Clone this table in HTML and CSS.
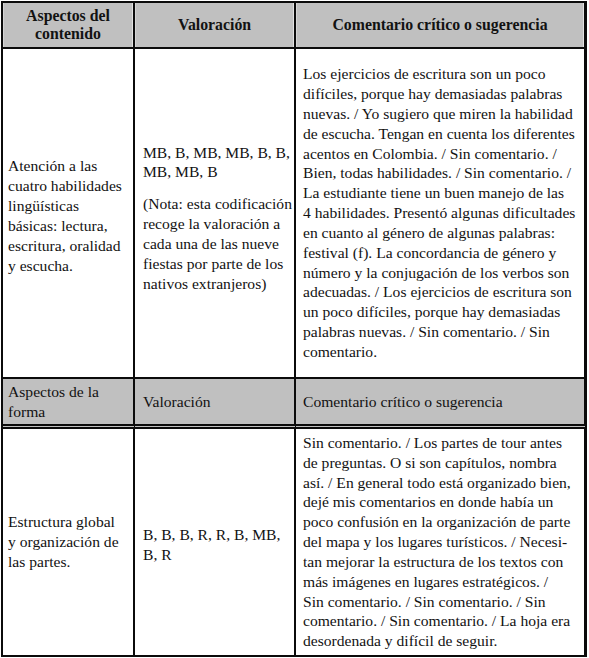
FILE: index.html
```html
<!DOCTYPE html>
<html lang="es">
<head>
<meta charset="utf-8">
<title>Valoración</title>
<link rel="stylesheet" href="styles.css">
</head>
<body>
<div class="grid">
  <div class="cell hd c-a">Aspectos del<br>contenido</div>
  <div class="cell hd c-b">Valoración</div>
  <div class="cell hd c-c">Comentario crítico o sugerencia</div>

  <div class="cell c-a shift">Atención a las cuatro habilidades lingüísticas básicas: lectura, escritura, oralidad y escucha.</div>
  <div class="cell c-b shift-more">
    <p>MB, B, MB, MB, B, B, MB, MB, B</p>
    <p class="note">(Nota: esta codificación recoge la valoración a cada una de las nueve fiestas por parte de los nativos extranjeros)</p>
  </div>
  <div class="cell c-c com">Los ejercicios de escritura son un poco<br>difíciles, porque hay demasiadas palabras<br>nuevas. / Yo sugiero que miren la habilidad<br>de escucha. Tengan en cuenta los diferentes<br>acentos en Colombia. / Sin comentario. /<br>Bien, todas habilidades. / Sin comentario. /<br>La estudiante tiene un buen manejo de las<br>4 habilidades. Presentó algunas dificultades<br>en cuanto al género de algunas palabras:<br>festival (f). La concordancia de género y<br>número y la conjugación de los verbos son<br>adecuadas. / Los ejercicios de escritura son<br>un poco difíciles, porque hay demasiadas<br>palabras nuevas. / Sin comentario. / Sin<br>comentario.</div>

  <div class="cell sub c-a">Aspectos de la<br>forma</div>
  <div class="cell sub c-b">Valoración</div>
  <div class="cell sub c-c">Comentario crítico o sugerencia</div>

  <div class="cell c-a">Estructura global y organización de las partes.</div>
  <div class="cell c-b shift">B, B, B, R, R, B, MB, B, R</div>
  <div class="cell c-c com">Sin comentario. / Los partes de tour antes<br>de preguntas. O si son capítulos, nombra<br>así. / En general todo está organizado bien,<br>dejé mis comentarios en donde había un<br>poco confusión en la organización de parte<br>del mapa y los lugares turísticos. / Necesi-<br>tan mejorar la estructura de los textos con<br>más imágenes en lugares estratégicos. /<br>Sin comentario. / Sin comentario. / Sin<br>comentario. / Sin comentario. / La hoja era<br>desordenada y difícil de seguir.</div>
</div>
</body>
</html>
```
FILE: styles.css
```css
html, body {
  margin: 0;
  padding: 0;
  background: #ffffff;
}

body {
  font-family: "Liberation Serif", serif;
  color: #121212;
}

.grid {
  display: grid;
  grid-template-columns: 132px 161px 291px;
  grid-template-rows: 46px 330px 50px 228px;
  width: max-content;
  margin: 1px 0 0 1px;
  border-top: 2px solid #0b0b0b;
  border-left: 2px solid #0b0b0b;
  font-size: 15.6px;
  line-height: 19.85px;
}

.cell {
  box-sizing: border-box;
  display: flex;
  flex-direction: column;
  justify-content: center;
  border-right: 2px solid #0b0b0b;
  border-bottom: 2px solid #0b0b0b;
  min-width: 0;
}

.c-a {
  padding: 0 10px 0 5px;
}

.c-b {
  padding: 0 2px 0 8px;
}

.c-c {
  padding: 0 4px 0 7px;
  border-right-width: 3px;
}

.hd {
  background: #c0c0c0;
  font-weight: bold;
  font-size: 15.8px;
  line-height: 18px;
  text-align: center;
  padding: 0 4px;
  box-shadow: inset -1px 0 0 #e2e2e2, inset 1px 0 0 #d4d4d4;
}

.sub {
  background: #c0c0c0;
  line-height: 19.5px;
  border-bottom: 5px double #0b0b0b;
}

.shift {
  padding-top: 6px;
}

.shift-more {
  padding-top: 10px;
}

.c-b p {
  margin: 0;
}

.c-b .note {
  margin-top: 12px;
}

.com {
  white-space: nowrap;
}
```
